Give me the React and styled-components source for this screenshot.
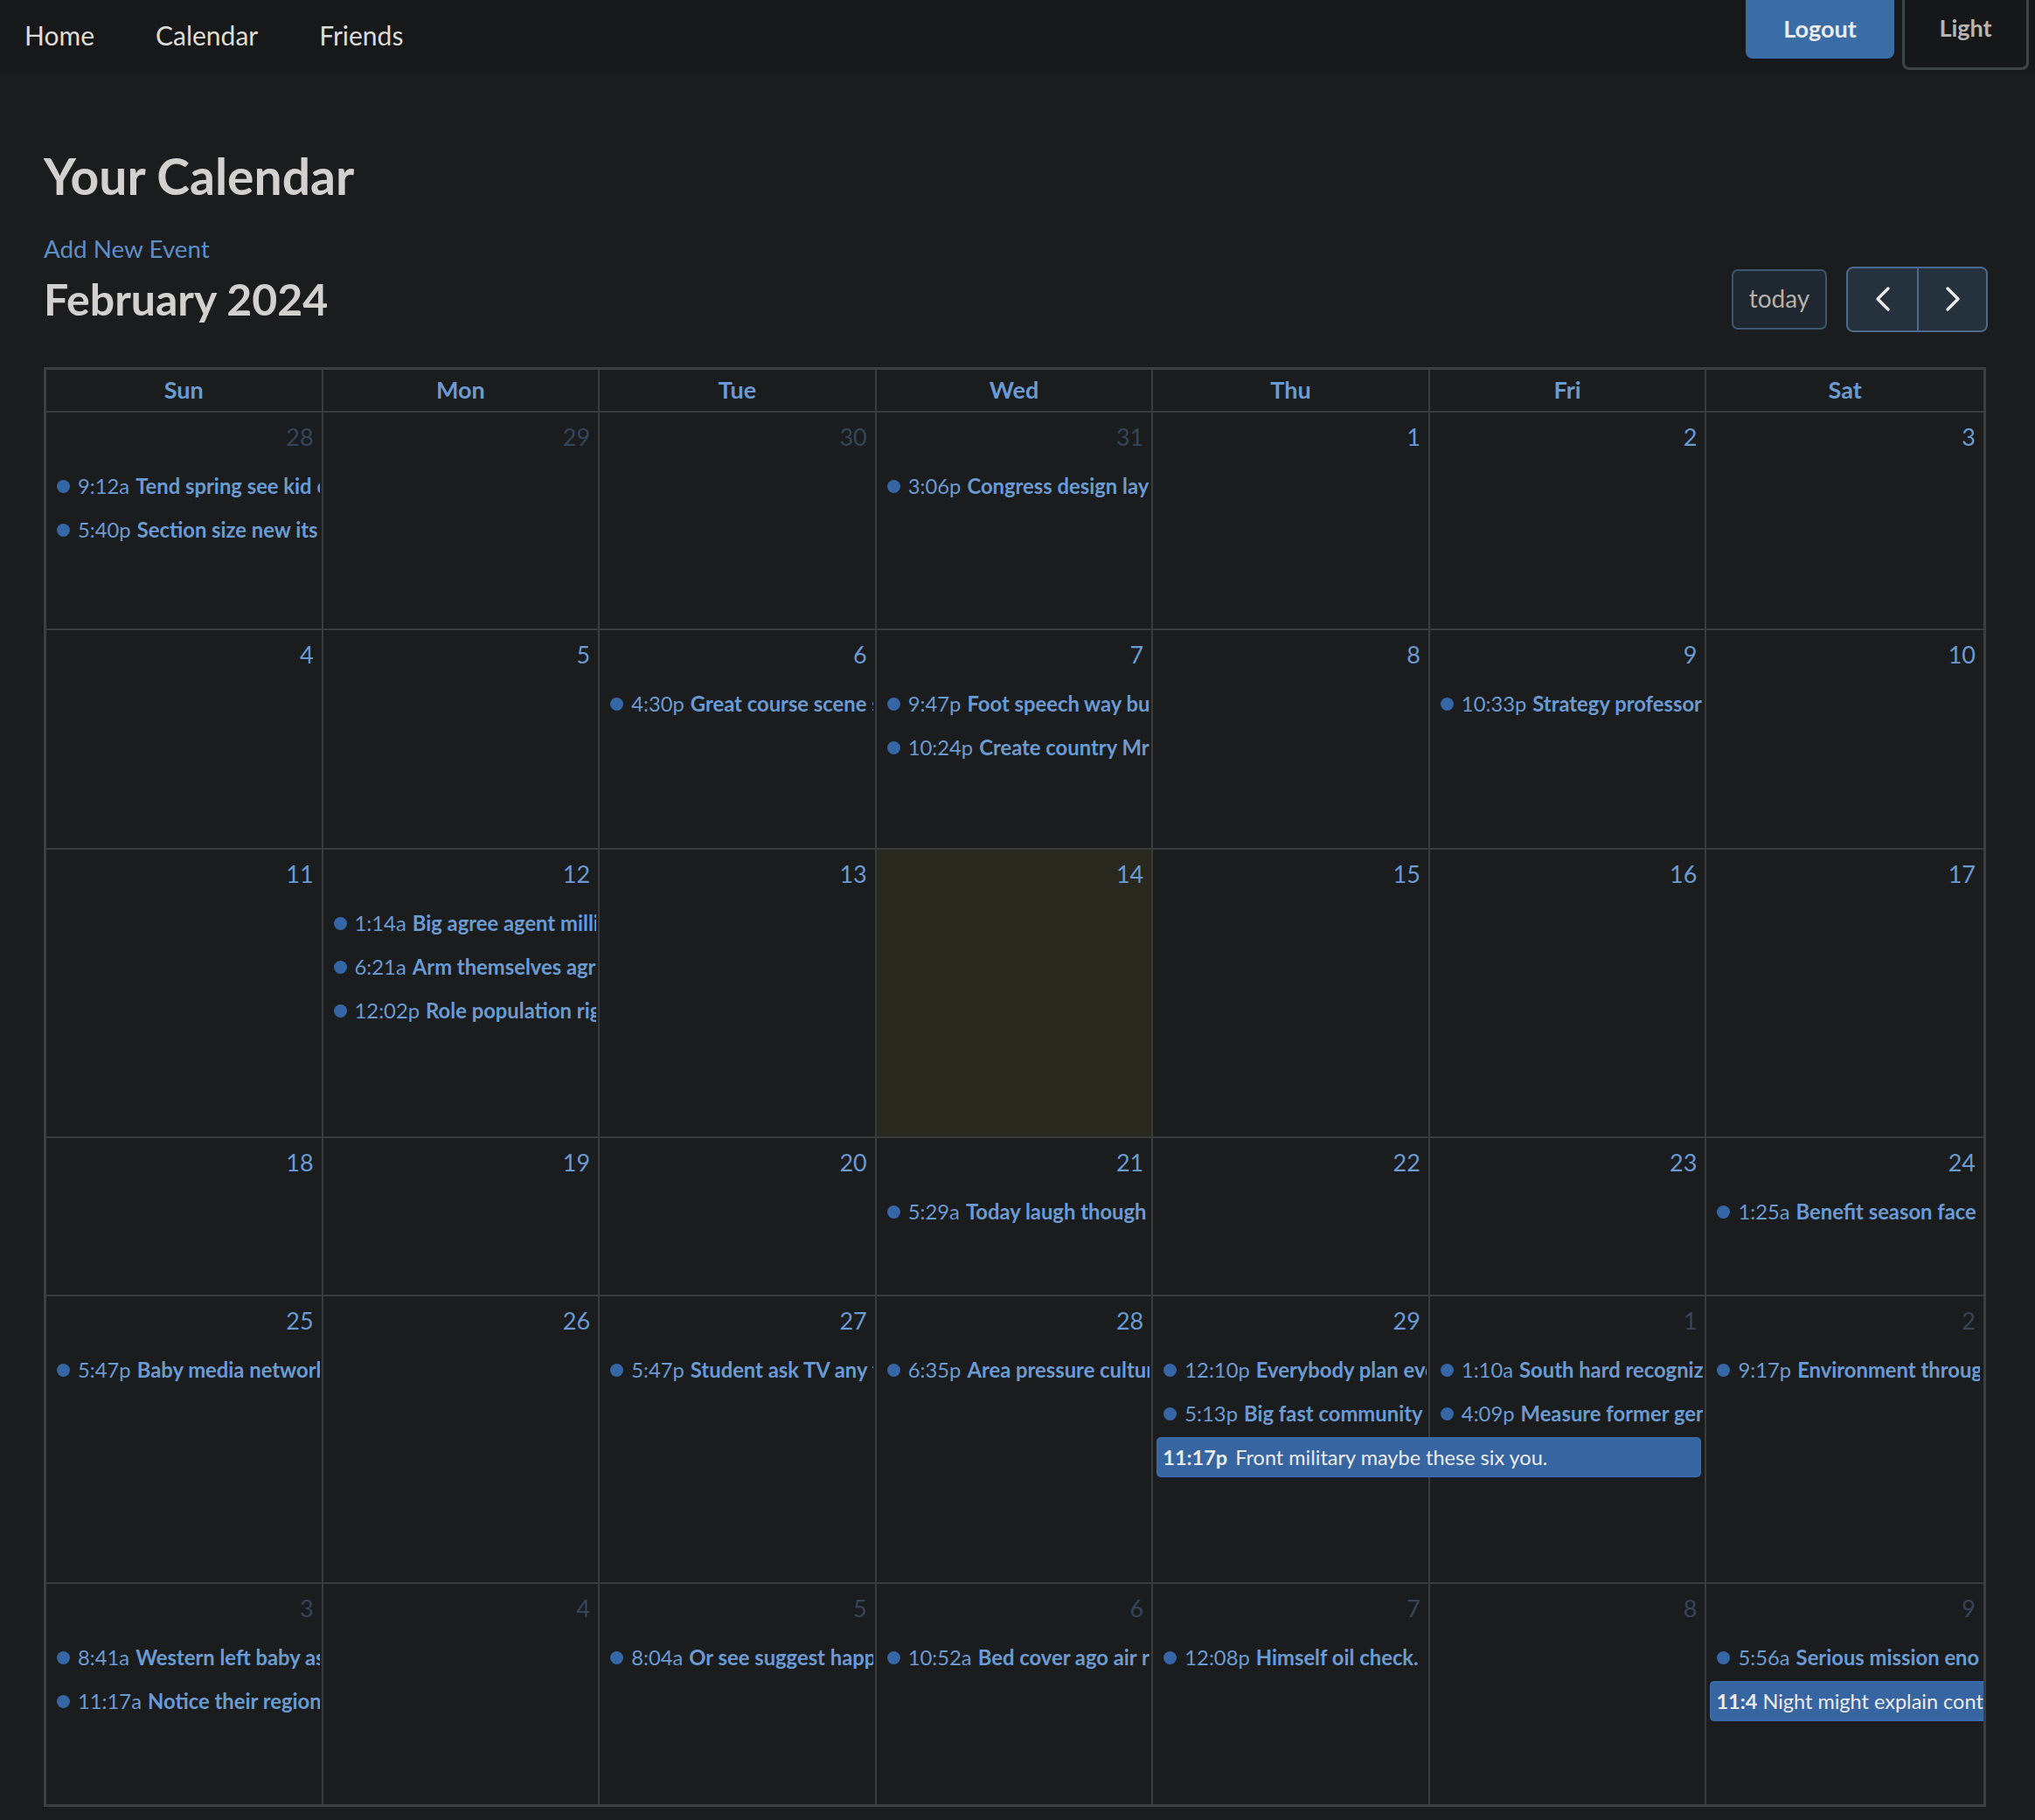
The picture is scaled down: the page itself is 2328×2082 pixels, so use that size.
import styled, { createGlobalStyle } from "styled-components";

const GlobalStyle = createGlobalStyle`
  body {
    margin: 0;
    background: #1b1c1e;
    font-family: "Lato", "Open Sans", sans-serif;
    color: #d3d1cd;
  }
`;

const BLUE = "#6a9bd3";
const DIM = "#34465b";

const Nav = styled.nav`
  display: flex;
  justify-content: space-between;
  align-items: flex-start;
  height: 82px;
  background: #17181a;
  padding-left: 28px;
  padding-right: 7px;
`;

const NavLinks = styled.div`
  display: flex;
  align-items: center;
  gap: 70px;
  height: 80px;
  font-size: 30px;
  color: #dedcd8;
`;

const NavLink = styled.a`
  color: inherit;
  text-decoration: none;
`;

const NavActions = styled.div`
  display: flex;
  gap: 9px;
  align-items: flex-start;
`;

const LogoutButton = styled.button`
  width: 170px;
  height: 67px;
  border: none;
  border-radius: 0 0 8px 8px;
  background: #3a6ca6;
  color: #ecebe9;
  font-family: inherit;
  font-weight: 700;
  font-size: 27px;
  padding: 0 0 2px;
`;

const ThemeButton = styled.button`
  width: 145px;
  height: 80px;
  border: 3px solid #3f4547;
  border-top: none;
  border-radius: 0 0 8px 8px;
  background: #161719;
  color: #b8b4ae;
  font-family: inherit;
  font-weight: 700;
  font-size: 27px;
  padding: 0 0 14px;
`;

const Main = styled.main`
  padding: 0 56px 16px 50px;
`;

const Title = styled.h1`
  margin: 86px 0 0;
  font-size: 57px;
  line-height: 67px;
  font-weight: 700;
  color: #d3d1cd;
`;

const AddLink = styled.a`
  display: block;
  margin-top: 33px;
  font-size: 27.8px;
  line-height: 34px;
  color: #5b8fc7;
  text-decoration: none;
`;

const Toolbar = styled.div`
  display: flex;
  justify-content: space-between;
  align-items: center;
  margin-top: 4px;
  margin-right: -2px;
  height: 72px;
`;

const MonthTitle = styled.h2`
  margin: 0;
  font-size: 50px;
  font-weight: 700;
  color: #d3d1cd;
`;

const ToolbarRight = styled.div`
  display: flex;
  align-items: center;
  gap: 22px;
`;

const TodayButton = styled.button`
  height: 69px;
  width: 109px;
  border: 2px solid #3e566f;
  border-radius: 7px;
  background: #1f2730;
  color: #b5b2ab;
  font-family: inherit;
  font-size: 28px;
  padding: 0 0 2px;
`;

const ButtonGroup = styled.div`
  display: flex;
  height: 71px;
  border: 2px solid #4c6a8d;
  border-radius: 8px;
  background: #26313e;
  overflow: hidden;
`;

const ArrowButton = styled.button`
  width: 79px;
  border: none;
  border-left: ${({ $divider }) => ($divider ? "2px solid #4c6a8d" : "none")};
  background: transparent;
  display: flex;
  align-items: center;
  justify-content: center;
  padding: 0;
`;

const Table = styled.div`
  margin-top: 42px;
  border: 3px solid #3d3e40;
`;

const HeaderRow = styled.div`
  display: grid;
  grid-template-columns: repeat(7, 1fr);
  height: 49px;
  box-sizing: border-box;
  border-bottom: 2px solid #3a3b3d;
`;

const HeaderCell = styled.div`
  text-align: center;
  font-size: 27px;
  font-weight: 700;
  line-height: 46px;
  color: ${BLUE};
  border-right: ${({ $last }) => ($last ? "none" : "2px solid #3a3b3d")};
`;

const Week = styled.div`
  display: grid;
  grid-template-columns: repeat(7, minmax(0, 1fr));
  grid-template-rows: 59px repeat(${({ $levels }) => $levels}, 50px) 1fr;
  box-sizing: border-box;
  height: ${({ $height }) => $height}px;
  border-bottom: ${({ $last }) => ($last ? "none" : "2px solid #3a3b3d")};
`;

const DayCell = styled.div`
  grid-row: 1 / -1;
  grid-column: ${({ $col }) => $col + 1};
  background: ${({ $today }) => ($today ? "#28281f" : "transparent")};
  border-right: ${({ $last }) => ($last ? "none" : "2px solid #3a3b3d")};
`;

const DayNumber = styled.div`
  text-align: right;
  padding: 8px 9px 0 0;
  font-size: 27px;
  line-height: 40px;
  color: ${({ $dim }) => ($dim ? DIM : BLUE)};
`;

const DotEvent = styled.div`
  grid-column: ${({ $col }) => $col + 1};
  grid-row: ${({ $level }) => $level + 2};
  display: flex;
  align-items: center;
  min-width: 0;
  overflow: hidden;
  white-space: nowrap;
  padding-left: 12px;
  margin-right: 4px;
  font-size: 23.8px;
  color: ${BLUE};
`;

const Dot = styled.span`
  flex: none;
  width: 15px;
  height: 15px;
  border-radius: 50%;
  background: #3566a6;
  margin-right: 9px;
`;

const EventTime = styled.span`
  flex: none;
  margin-right: 7px;
`;

const EventTitle = styled.span`
  font-weight: 700;
`;

const BarEvent = styled.div`
  grid-column: ${({ $col }) => $col + 1} / span ${({ $span }) => $span};
  grid-row: ${({ $level }) => $level + 2};
  align-self: center;
  display: flex;
  align-items: center;
  min-width: 0;
  height: 46px;
  box-sizing: border-box;
  margin: 0 ${({ $cont }) => ($cont ? "0" : "6px")} 0 4px;
  padding-left: 5px;
  overflow: hidden;
  white-space: nowrap;
  background: #3765a2;
  border: 2px solid #3a6aab;
  border-right: ${({ $cont }) => ($cont ? "none" : "2px solid #3a6aab")};
  border-radius: ${({ $cont }) => ($cont ? "5px 0 0 5px" : "5px")};
  font-size: 23.5px;
  color: #ecebe8;
`;

const BarTime = styled.span`
  flex: none;
  font-weight: 700;
  margin-right: ${({ $tight }) => ($tight ? "6px" : "9px")};
`;

const Chevron = ({ dir }) => (
  <svg width="18" height="30" viewBox="0 0 18 30" fill="none">
    <polyline
      points={dir === "left" ? "15,3 3,15 15,27" : "3,3 15,15 3,27"}
      stroke="#ecebe8"
      strokeWidth="3.4"
      strokeLinecap="round"
      strokeLinejoin="round"
    />
  </svg>
);

const dayNames = ["Sun", "Mon", "Tue", "Wed", "Thu", "Fri", "Sat"];

const weeks = [
  {
    height: 249,
    days: [[28, true], [29, true], [30, true], [31, true], [1], [2], [3]],
    events: [
      { col: 0, level: 0, time: "9:12a", title: "Tend spring see kid each." },
      { col: 0, level: 1, time: "5:40p", title: "Section size new its voice." },
      { col: 3, level: 0, time: "3:06p", title: "Congress design lay out." },
    ],
  },
  {
    height: 251,
    days: [[4], [5], [6], [7], [8], [9], [10]],
    events: [
      { col: 2, level: 0, time: "4:30p", title: "Great course scene sit." },
      { col: 3, level: 0, time: "9:47p", title: "Foot speech way build." },
      { col: 3, level: 1, time: "10:24p", title: "Create country Mr wait." },
      { col: 5, level: 0, time: "10:33p", title: "Strategy professor mind." },
    ],
  },
  {
    height: 330,
    today: 3,
    days: [[11], [12], [13], [14], [15], [16], [17]],
    events: [
      { col: 1, level: 0, time: "1:14a", title: "Big agree agent million." },
      { col: 1, level: 1, time: "6:21a", title: "Arm themselves agree." },
      { col: 1, level: 2, time: "12:02p", title: "Role population right." },
    ],
  },
  {
    height: 181,
    days: [[18], [19], [20], [21], [22], [23], [24]],
    events: [
      { col: 3, level: 0, time: "5:29a", title: "Today laugh though whole." },
      { col: 6, level: 0, time: "1:25a", title: "Benefit season face few." },
    ],
  },
  {
    height: 329,
    days: [[25], [26], [27], [28], [29], [1, true], [2, true]],
    events: [
      { col: 0, level: 0, time: "5:47p", title: "Baby media network." },
      { col: 2, level: 0, time: "5:47p", title: "Student ask TV any tax." },
      { col: 3, level: 0, time: "6:35p", title: "Area pressure culture." },
      { col: 4, level: 0, time: "12:10p", title: "Everybody plan ever." },
      { col: 4, level: 1, time: "5:13p", title: "Big fast community rest." },
      { col: 5, level: 0, time: "1:10a", title: "South hard recognize." },
      { col: 5, level: 1, time: "4:09p", title: "Measure former general." },
      { col: 6, level: 0, time: "9:17p", title: "Environment through." },
      { col: 4, level: 2, span: 2, bar: true, time: "11:17p", title: "Front military maybe these six you." },
    ],
  },
  {
    height: 252,
    last: true,
    days: [[3, true], [4, true], [5, true], [6, true], [7, true], [8, true], [9, true]],
    events: [
      { col: 0, level: 0, time: "8:41a", title: "Western left baby as." },
      { col: 0, level: 1, time: "11:17a", title: "Notice their region." },
      { col: 2, level: 0, time: "8:04a", title: "Or see suggest happy." },
      { col: 3, level: 0, time: "10:52a", title: "Bed cover ago air role." },
      { col: 4, level: 0, time: "12:08p", title: "Himself oil check." },
      { col: 6, level: 0, time: "5:56a", title: "Serious mission enough." },
      { col: 6, level: 1, span: 1, bar: true, cont: true, time: "11:4", title: "Night might explain control." },
    ],
  },
];

const WeekRow = ({ week }) => {
  const levels = Math.max(...week.events.map((e) => e.level)) + 1;
  return (
    <Week $height={week.height} $levels={levels} $last={week.last}>
      {week.days.map(([num, dim], i) => (
        <DayCell key={i} $col={i} $last={i === 6} $today={week.today === i}>
          <DayNumber $dim={dim}>{num}</DayNumber>
        </DayCell>
      ))}
      {week.events.map((ev, i) =>
        ev.bar ? (
          <BarEvent key={i} $col={ev.col} $span={ev.span} $level={ev.level} $cont={ev.cont}>
            <BarTime $tight={ev.cont}>{ev.time}</BarTime>
            <span>{ev.title}</span>
          </BarEvent>
        ) : (
          <DotEvent key={i} $col={ev.col} $level={ev.level}>
            <Dot />
            <EventTime>{ev.time}</EventTime>
            <EventTitle>{ev.title}</EventTitle>
          </DotEvent>
        )
      )}
    </Week>
  );
};

export default function App() {
  return (
    <>
      <GlobalStyle />
      <Nav>
        <NavLinks>
          <NavLink href="#">Home</NavLink>
          <NavLink href="#">Calendar</NavLink>
          <NavLink href="#">Friends</NavLink>
        </NavLinks>
        <NavActions>
          <LogoutButton>Logout</LogoutButton>
          <ThemeButton>Light</ThemeButton>
        </NavActions>
      </Nav>
      <Main>
        <Title>Your Calendar</Title>
        <AddLink href="#">Add New Event</AddLink>
        <Toolbar>
          <MonthTitle>February 2024</MonthTitle>
          <ToolbarRight>
            <TodayButton>today</TodayButton>
            <ButtonGroup>
              <ArrowButton aria-label="prev">
                <Chevron dir="left" />
              </ArrowButton>
              <ArrowButton $divider aria-label="next">
                <Chevron dir="right" />
              </ArrowButton>
            </ButtonGroup>
          </ToolbarRight>
        </Toolbar>
        <Table>
          <HeaderRow>
            {dayNames.map((d, i) => (
              <HeaderCell key={d} $last={i === 6}>
                {d}
              </HeaderCell>
            ))}
          </HeaderRow>
          {weeks.map((w, i) => (
            <WeekRow key={i} week={w} />
          ))}
        </Table>
      </Main>
    </>
  );
}
